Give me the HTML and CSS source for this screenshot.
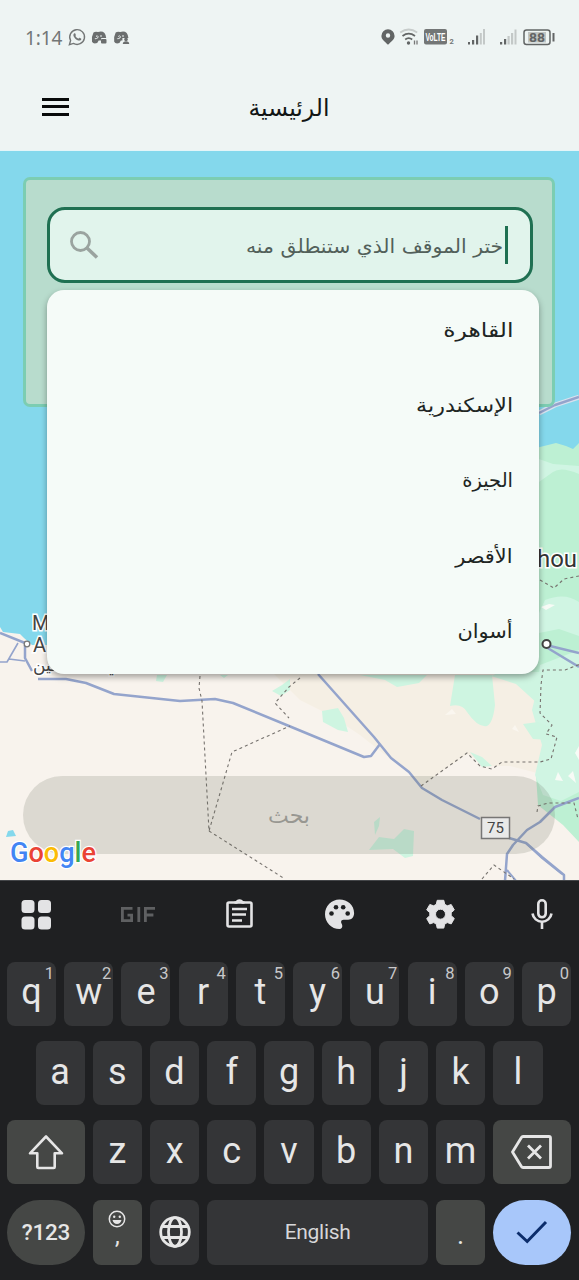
FILE: index.html
```html
<!DOCTYPE html>
<html lang="ar">
<head>
<meta charset="utf-8">
<title>الرئيسية</title>
<link rel="stylesheet" href="styles.css">
</head>
<body>
<div class="phone">
  <div class="status">
    <span class="clock">1:14</span>
    <svg class="st-left" width="64" height="20" viewBox="67 28 64 20">
      <path d="M69.400 44.600l1.200-4.100a7.400 7.400 0 1 1 2.800 2.900z" fill="none" stroke="#737676" stroke-width="1.400"/>
      <path d="M74 33.600c.8-.7 1.400-.2 1.700.8.4 1-.6 1.300 0 2.100.7 1 1.700 1.800 2.600 2.100.8.2 1-1.100 1.800-.7 1.200.5 1.700 1 .8 2-1.500 1.500-4 .4-5.600-1.200s-2.700-3.700-1.300-5.100z" fill="#737676"/>
      <g fill="#6b6e6e">
        <path d="M93.500 32.500q2-1.300 4.500-.4 4-1.300 6.500.8 1.500 2 1.700 5h-5v2.500l-2.500.2-1.500 2.500q-4 1.200-5.200-1.300-.8-5 1.500-9.300z"/>
        <rect x="101" y="39" width="5.500" height="4.500" rx="1"/>
        <path d="M115.700 32.500q2-1.300 4.500-.4 4-1.300 6.500.8 1.500 2 1.700 5h-6v2.500l-1.500.2-1.500 2.500q-4 1.200-5.200-1.300-.8-5 1.500-9.300z"/>
        <circle cx="126" cy="39.400" r="1.800"/><path d="M122.800 44q0-2.800 3.200-2.800t3.200 2.800z"/>
      </g>
      <path d="M96 36.500q1.500-1.500 2 0t-1.500 2-1.500 0M118.300 36.500q1.500-1.500 2 0t-1.500 2-1.500 0M101 35v2M123 35v2" fill="none" stroke="#eef4f3" stroke-width="1"/>
    </svg>
    <svg class="st-right" width="176" height="20" viewBox="380 28 176 20">
      <path fill-rule="evenodd" d="M388 29.300a6.600 6.600 0 0 0-6.600 6.600c0 3.500 3.500 5.500 6.600 8.900 3.100-3.400 6.600-5.400 6.600-8.900a6.600 6.600 0 0 0-6.600-6.600zm0 4a2.200 2.200 0 1 1 0 4.400 2.200 2.200 0 0 1 0-4.400z" fill="#626565"/>
      <g fill="none" stroke-width="1.800">
        <path d="M400.200 32.500q8.500-6 17 0" stroke="#c7cccb"/>
        <path d="M402.500 36q6.200-4.600 12.500 0M405.200 39.500q3.500-2.600 7 0" stroke="#626565"/>
      </g>
      <circle cx="408.500" cy="43" r="1.700" fill="#626565"/>
      <path d="M414.500 40.500v4M417 40.500v4" stroke="#777" stroke-width="1.300"/>
      <rect x="424" y="29" width="23" height="15.500" rx="2" fill="#737676"/>
      <text x="425.500" y="40.700" textLength="20" lengthAdjust="spacingAndGlyphs" class="volte">VoLTE</text>
      <text x="449.500" y="44" class="sim">2</text>
      <g fill="#626565"><path d="M468 42h2v2.500h-2zM472 40h2.200v4.500H472zM476 35.500h2.200v9H476zM500 42h2.200v2.500H500zM504 39h2.200v5.500H504z"/></g>
      <g fill="#c3c8c7"><path d="M479.800 33h2v11.500h-2zM483 29h2v15.500h-2zM507.500 36h2.200v8.500h-2.200zM511 33h2.200v11.500H511zM514.500 29.500h2v15h-2z"/></g>
      <rect x="524" y="30" width="26" height="14.500" rx="2.500" fill="none" stroke="#626565" stroke-width="1.500"/>
      <rect x="528" y="32" width="18" height="10.500" fill="#c0c4c3"/>
      <text x="529" y="42" textLength="16" lengthAdjust="spacingAndGlyphs" class="batt">88</text>
      <path d="M553.500 33v8.500" stroke="#626565" stroke-width="2"/>
    </svg>
  </div>

  <header class="header">
    <span class="menu"><i></i><i></i><i></i></span>
    <h1 class="title" dir="rtl">الرئيسية</h1>
  </header>

  <main class="map">
    <svg class="map-art" width="579" height="729" viewBox="0 151 579 729">
      <rect x="0" y="151" width="579" height="729" fill="#f8f3ed"/>
      <path d="M260 660H579V790L545 775 510 766 490 766 467 754 421 786 407 771 388 757 360 735 330 715 300 700z" fill="#f5efe4"/>
      <path d="M0 151H579V600H60V645L32 645 24 638 20 634 3 632 0 627z" fill="#84d8ec"/>
      <path d="M530 448l10-1 16-4 10 3 7 3 6-6V842l-16-17-25-20-2-30 7-25-4-40-14-45z" fill="#bdf0d3"/>
      <path d="M539 459l14 5 26 2v8q-18-8-26-2l-14 10zM545 600q20-8 34 2v34l-20-7-20 4v-20zM540 665l39-15v142l-18 9-18-6-8-20 7-30-10-35 6-25z" fill="#d0f5e3"/>
      <path d="M455 675h37l3 30q-2 18-8 21-9 2-20-14-5-9-17-6zM360 675h67l-8 8-22 4-12-7zM500 672h42l-4 32-22-20-25-8zM322 711l16-3 6 10 4 14-10-2-15-8zM523 724l15-2 14 6-2 12-17-1zM470 752l12 5 10 9-10 1zM157 675h10l-4 7-7-1zM272 691l10-6 8-6v11l-9 6zM220 675h8l-4 3z" fill="#cef5e1"/>
      <path d="M374 822l6-5-1 9-4 9zM369 850l10-13 15 2 10-10 10 2-1 25-8 2-12-9z" fill="#cef5e1"/>
      <path d="M555 780l3-8 5 9zM568 776l5-5 3 12zM575 753l4-7v14zM541 607l8-3 6 1-9 5z" fill="#f7fbf6"/>
      <path d="M519 732l-4-7-3 4zM445 715l7-6 4 5z" fill="#faf6ef"/>
      <path d="M539 413l16-8 24-8" fill="none" stroke="#d8e1ee" stroke-width="5"/>
      <g fill="none" stroke="#94a4cc" stroke-width="2.500" stroke-linejoin="round">
        <path d="M539 413l16-8 24-8M0 633l25 10M25 645v13l7 13M38 679h28l20 4 28 11 66 7 35-2 18 4 56 23 75 31 7-1 9-12M318 674l56 63 17 21 18 14 13 16 20 12 38 19M509 838l17 5 16 14 22 18v6M579 798l-24 9-15 15-13 8-14 15-6 9-2 27M546 645l33 8M546 647l33 20"/>
        <path d="M0 662h7l11-19M9 659l16 2" stroke-width="1.600"/>
        <path d="M526 843l16 15 20 16M507 870l10 12" stroke-width="2"/>
      </g>
      <g fill="none" stroke="#77736f" stroke-width="1.100" stroke-dasharray="3 3">
        <path d="M200 676l-1 12 3 13 7 130 23-79 58-26M209 831l76 48M300 678l-11 9-14 16 14 15M421 786l46-33 13 13 12 3 10-7h38l11-3 6-22-11-3 6-9-12-12 1-28 2-15h22l18-7M540 580l14 8 10-9 15-3M537 812l1-6 10-3h26l4 16M482 879l12-14 20 14"/>
      </g>
      <g class="halo"><text x="32" y="630" class="place">M</text><text x="33" y="652" class="place">A</text><text x="33" y="671" class="place-ar">ـين</text><text x="100" y="673" class="place-ar">ية</text><text x="537" y="567" class="city" textLength="40" lengthAdjust="spacingAndGlyphs">hou</text></g>
      <circle cx="27" cy="644" r="2.800" fill="#fff" stroke="#777" stroke-width="1.300"/>
      <circle cx="546.500" cy="644" r="4" fill="#fff" stroke="#444" stroke-width="2"/>
      <path d="M6 837l2-6 5-1 3 6z" fill="#84d8ec"/>
    </svg>

    <div class="panel">
      <div class="search">
        <svg width="30" height="30" viewBox="0 0 30 30" fill="none" stroke="#9aa39f" stroke-width="2.800"><circle cx="11.500" cy="11.500" r="9"/><path d="M18 18l10 9.500" stroke-width="3.500"/></svg>
        <span class="query" dir="rtl">ختر الموقف الذي ستنطلق منه</span>
        <i class="caret"></i>
      </div>
      <ul class="options" dir="rtl">
        <li><span class="wide">القاهرة</span></li>
        <li><span class="mid">الإسكندرية</span></li>
        <li><span>الجيزة</span></li>
        <li><span class="slim">الأقصر</span></li>
        <li><span class="slim">أسوان</span></li>
      </ul>
    </div>

    <button class="go" dir="rtl"><span>بحث</span></button>
    <svg class="map-over" width="579" height="80" viewBox="0 800 579 80">
      <rect x="481.500" y="817.500" width="28" height="21" fill="#e9e9e8" stroke="#777675" stroke-width="1.500"/>
      <text x="495.500" y="833" text-anchor="middle" class="route">75</text>
      <text x="10" y="862" textLength="86" lengthAdjust="spacingAndGlyphs" class="google"><tspan fill="#4285f4">G</tspan><tspan fill="#ea4335">o</tspan><tspan fill="#fbbc05">o</tspan><tspan fill="#4285f4">g</tspan><tspan fill="#34a853">l</tspan><tspan fill="#ea4335">e</tspan></text>
    </svg>
  </main>

  <section class="keyboard">
    <div class="tools">
      <svg width="32" height="32" viewBox="0 0 32 32" fill="#e3e3e5"><rect x="1.500" y="2" width="13" height="13" rx="3.500"/><rect x="18" y="2" width="13" height="13" rx="3.500"/><rect x="1.500" y="18.500" width="13" height="13" rx="3.500"/><rect x="18" y="18.500" width="13" height="13" rx="3.500"/></svg>
      <svg width="36" height="32" viewBox="1 0 36 32" fill="none" stroke="#5f6062" stroke-width="2.800"><path d="M13.500 10.400H3.400v12.200h9.200v-5.500H8.500M19.800 9v15M26.400 24V10.400H36M26.400 17h8"/></svg>
      <svg width="32" height="32" viewBox="1.500 0 32 32" fill="none" stroke="#e3e3e5" stroke-width="2.600"><rect x="4" y="4.500" width="24" height="24" rx="1.500"/><path d="M8.500 11h15M8.500 16.500h14M8.500 22.500h10"/><path d="M11 4.500h2a3.200 3.200 0 0 1 6 0h2" stroke-width="2.500"/></svg>
      <svg width="32" height="32" viewBox="1.500 0 32 32"><path d="M16 1.500C8 1.500 1.500 8 1.500 16.200S8 31 16 31c2 0 2.800-1.500 2.800-3 0-2-1.200-2.500-1.200-4 0-1.400 1-2.300 2.500-2.300h4.500c3.600 0 6-2.800 6-6.500C30.600 7 24 1.500 16 1.500z" fill="#e3e3e5"/><g fill="#1f2022"><circle cx="8" cy="15.500" r="2.300"/><circle cx="12.500" cy="9.300" r="2.300"/><circle cx="19.700" cy="9.300" r="2.300"/><circle cx="24.200" cy="15.500" r="2.300"/></g></svg>
      <svg width="32" height="32" viewBox="1.500 0 32 32"><path fill-rule="evenodd" d="M12.700 2.300h6.600l.9 4 2.600 1.500 3.900-1.300 3.100 5.400-3.100 2.800v3l3.100 2.800-3.100 5.400-3.900-1.300-2.600 1.500-.9 4h-6.600l-.9-4-2.600-1.500-3.900 1.300-3.100-5.400 3.100-2.800v-3l-3.100-2.800 3.100-5.400 3.900 1.300 2.600-1.500zM16 11.200a5 5 0 1 0 0 10 5 5 0 0 0 0-10z" fill="#e3e3e5" stroke="#e3e3e5" stroke-linejoin="round"/></svg>
      <svg width="32" height="32" viewBox="0 0 32 32" fill="none" stroke="#e3e3e5" stroke-width="2.600"><rect x="12.300" y="2.300" width="7.400" height="17" rx="3.700"/><path d="M6.500 15.500a9.600 9.600 0 0 0 19 0M16 24v7"/></svg>
    </div>
    <div class="keys ten">
      <b>q<sup>1</sup></b><b>w<sup>2</sup></b><b>e<sup>3</sup></b><b>r<sup>4</sup></b><b>t<sup>5</sup></b><b>y<sup>6</sup></b><b>u<sup>7</sup></b><b>i<sup>8</sup></b><b>o<sup>9</sup></b><b>p<sup>0</sup></b>
    </div>
    <div class="keys nine">
      <b>a</b><b>s</b><b>d</b><b>f</b><b>g</b><b>h</b><b>j</b><b>k</b><b>l</b>
    </div>
    <div class="keys third">
      <b class="fn"><svg width="36" height="36" viewBox="0 0 36 36" fill="none" stroke="#e6e6e6" stroke-width="2.600" stroke-linejoin="round"><path d="M18 2.500L2 19.300h7.300V33q0 1 1 1h15.400q1 0 1-1V19.300H34z"/></svg></b>
      <b>z</b><b>x</b><b>c</b><b>v</b><b>b</b><b>n</b><b>m</b>
      <b class="fn"><svg width="42" height="34" viewBox="2 0 42 34" fill="none" stroke="#e6e6e6" stroke-width="2.800" stroke-linejoin="round"><path d="M14 1.500h26q1.500 0 1.500 1.500v28q0 1.500-1.500 1.500H14q-1 0-1.600-1L3.500 17 12.400 2.500q.6-1 1.600-1zM19 10.500L32 23.500M32 10.500L19 23.500"/></svg></b>
    </div>
    <div class="keys fourth">
      <b class="fn round num">?123</b>
      <b class="fn comma"><svg width="18" height="18" viewBox="0 0 18 18"><circle cx="9" cy="9" r="7.700" fill="none" stroke="#e6e6e6" stroke-width="1.500"/><circle cx="6.200" cy="6.700" r="1.200" fill="#e6e6e6"/><circle cx="11.800" cy="6.700" r="1.200" fill="#e6e6e6"/><path d="M4.500 10h9q-1 4-4.500 4t-4.500-4z" fill="#e6e6e6"/></svg><span>,</span></b>
      <b><svg width="32" height="32" viewBox="0 0 32 32" fill="none" stroke="#e6e6e6" stroke-width="2.800"><circle cx="16" cy="16" r="14.300"/><ellipse cx="16" cy="16" rx="6.500" ry="14.300"/><path d="M3.500 10.500h25M3.500 21.500h25"/></svg></b>
      <b class="space">English</b>
      <b class="fn dot">.</b>
      <b class="round enter"><svg width="32" height="24" viewBox="0 0 32 24" fill="none" stroke="#0c2d6b" stroke-width="3"><path d="M1.500 12.500l9.700 9L30 2"/></svg></b>
    </div>
  </section>
</div>
</body>
</html>
```

FILE: styles.css
```css
* { box-sizing: border-box; }
body { margin: 0; background: #1f2022; }
svg { display: block; flex: none; }
.phone { width: 579px; height: 1280px; display: flex; flex-direction: column; overflow: hidden; font-family: Roboto, "DejaVu Sans", sans-serif; }

.status { height: 75px; background: #eef4f3; display: flex; align-items: center; padding: 1px 23px 0 25px; }
.clock { font: 19px/20px "Noto Sans", sans-serif; color: #737676; width: 42px; letter-spacing: -.1px; white-space: nowrap; padding-bottom: 1px; }
.st-right { margin-left: auto; }
.volte { font: bold 10.500px "Liberation Sans", sans-serif; fill: #fff; }
.sim { font: bold 7.500px Roboto, sans-serif; fill: #737676; }
.batt { font: bold 13px Roboto, sans-serif; fill: #626565; }

.header { height: 76px; background: #eef4f3; display: grid; grid-template-columns: 69px 1fr 69px; align-items: center; padding-bottom: 12px; border-bottom: 1px solid #e4f5f8; }
.menu { display: flex; flex-direction: column; gap: 4.500px; margin-left: 41.500px; }
.menu i { width: 27px; height: 3px; background: #080a0a; }
.title { margin: 0; text-align: center; font: 23.500px/40px "DejaVu Sans", sans-serif; color: #111414; white-space: nowrap; padding: 2px 1px 0 0; }

.map { height: 729px; position: relative; display: flex; flex-direction: column; padding: 26px 24px 26px 23px; }
.map-art { position: absolute; left: 0; top: 0; }
.map-over { position: absolute; left: 0; bottom: 0; }
.halo { stroke: #fff; stroke-width: 3px; paint-order: stroke; fill: #444; }
.place { font: 20px Roboto, sans-serif; }
.place-ar { font: 17px "DejaVu Sans", sans-serif; }
.city { font: 400 24px Roboto, sans-serif; fill: #333; }
.route { font: 15px Roboto, sans-serif; fill: #444; }
.google { font: 500 28px Roboto, sans-serif; stroke: #fff; stroke-width: 2.500px; paint-order: stroke; }

.panel { position: relative; height: 229.500px; border: 3px solid #7ccdb2; border-radius: 7px; background: #b8dccd; padding: 27px 19px 27px 21px; }
.search { height: 76px; border: 3px solid #1f7052; border-radius: 18px; background: #e1f4ec; display: flex; align-items: center; padding: 0 22px 0 19px; }
.query { margin-left: auto; margin-right: 2px; padding-top: 3px; font: 19.500px/38px "DejaVu Sans", sans-serif; color: #52605a; white-space: nowrap; transform: scaleX(1.045); transform-origin: right; }
.caret { width: 3px; height: 38px; background: #1f7052; }
.options { position: absolute; left: 21px; top: 110px; width: 492px; height: 384px; margin: 0; padding: 3px 26px 0; list-style: none; border-radius: 17px; background: #f5fbf8; box-shadow: 0 3px 6px rgba(0,0,0,.35); }
.options li { height: 75.400px; display: flex; align-items: center; font: 19.500px/30px "DejaVu Sans", sans-serif; color: #202523; white-space: nowrap; }
.options span { display: block; transform-origin: right; }
.options .wide { transform: scaleX(1.200); }
.options .mid { transform: scaleX(1.140); }
.options .slim { transform: scaleX(1.070); }

.go { position: relative; margin: auto 0 0; height: 78px; border: 0; border-radius: 39px; background: rgba(95,98,84,.18); font: 22px "DejaVu Sans", sans-serif; color: #989791; }

.keyboard { flex: 1; background: #1f2022; border-top: 1px solid #444649; padding: 0 8px 0 7px; display: flex; flex-direction: column; gap: 15.500px; color: #e6e6e6; }
.tools { height: 65.500px; display: flex; justify-content: space-between; align-items: center; padding: 0 13px; }
.keys { display: grid; gap: 8.200px; height: 63.700px; }
.keys b { position: relative; display: flex; align-items: center; justify-content: center; min-width: 0; border-radius: 8px; background: #343537; font: 400 36px/56px Roboto, sans-serif; padding-bottom: 3px; }
.keys sup { position: absolute; right: 2px; top: 2px; font: 16.500px/19px Roboto, sans-serif; color: #c8c8ca; }
.ten { grid-template-columns: repeat(10, 1fr); }
.nine { grid-template-columns: repeat(9, 1fr); padding: 0 28.500px; }
.third { grid-template-columns: 77.700px repeat(7, 1fr) 77.700px; }
.fourth { grid-template-columns: 77.700px 49px 49px 1fr 49px 77.700px; height: 65px; }
.keys .fn { background: #454745; padding-bottom: 0; }
.keys b:has(svg) { padding-bottom: 0; }
.keys .round { border-radius: 33px; }
.keys .num { font: 500 22.500px/50px Roboto, sans-serif; letter-spacing: -.3px; }
.keys .comma { flex-direction: column; justify-content: flex-start; padding-top: 10px; }
.comma span { font: 24px/20px Roboto, sans-serif; margin-top: -2px; }
.keys .space { font: 21px/50px Roboto, sans-serif; letter-spacing: -.3px; padding: 0; color: #d7d7d9; }
.keys .dot { font: 27px/50px Roboto, sans-serif; padding-top: 6px; }
.keys .enter { background: #a8c7fa; }
```
